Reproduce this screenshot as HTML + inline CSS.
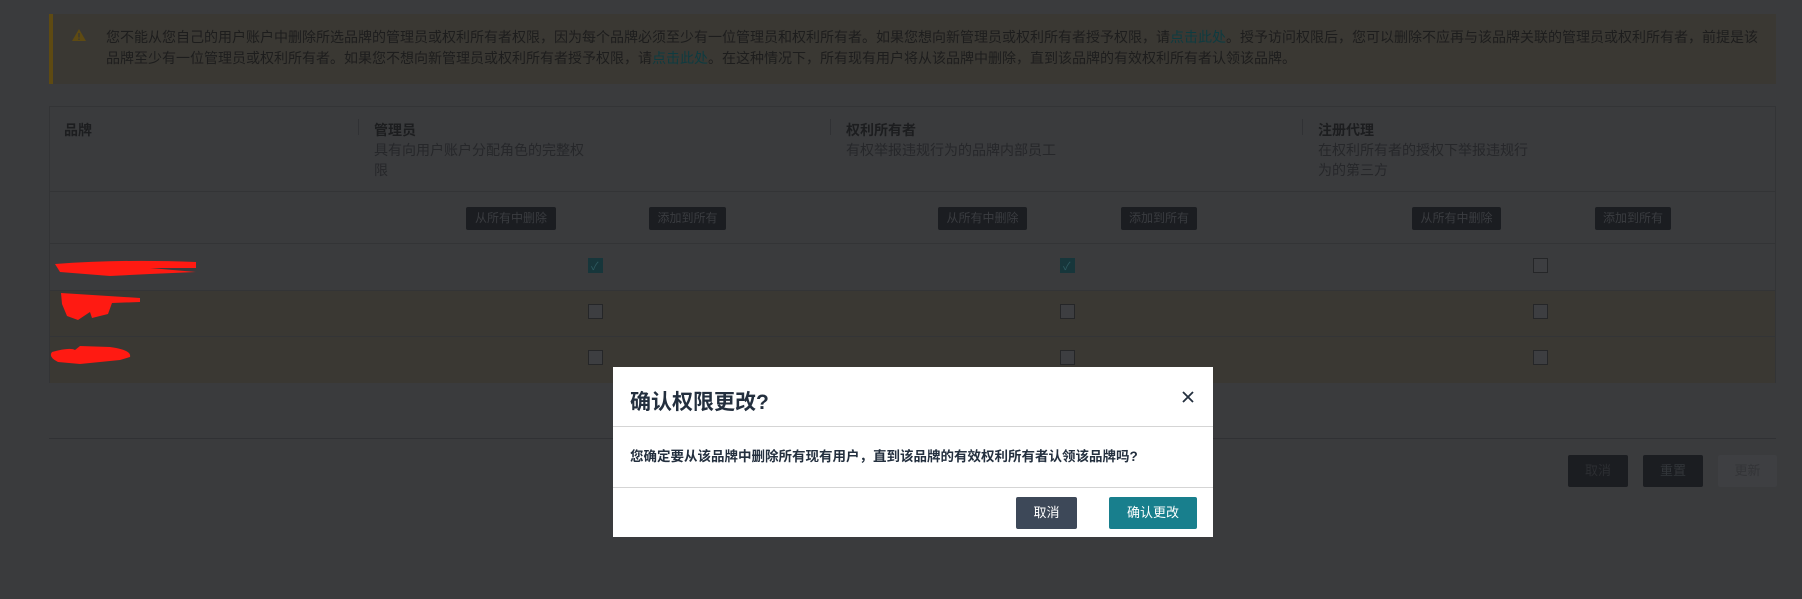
<!DOCTYPE html>
<html><head><meta charset="utf-8"><style>
*{box-sizing:border-box;margin:0;padding:0}
body{width:1802px;height:599px;background:#3a3b3d;font-family:"Liberation Sans","Noto Sans CJK SC",sans-serif;position:relative;overflow:hidden;color:#222}
.a{position:absolute}
.alert{left:49px;top:14px;width:1727px;height:70px;background:#3a3833;border-left:4px solid #5e4a12}
.alert p{position:absolute;left:53px;top:13px;width:1662px;font-size:14px;line-height:21px;color:#1d1d1d}
.alert p span{color:#0e3b40}
.tbl{left:49px;top:106px;width:1727px;height:277px;border:1px solid #333436}
.hl{height:1px;background:#333436;left:0;right:0}
.hd{font-size:14px;font-weight:bold;color:#1c1d1f}
.sd{font-size:14px;color:#26272a;line-height:20px}
.btn{background:#1b1d21;color:#3a3c40;font-size:12px;text-align:center;line-height:23px;height:23px;border-radius:2px}
.cb{width:15px;height:15px;border:1px solid #252628;background:#3d3e41}
.ck{background:#17363b;border-color:#17363b}
.ck:after{content:"✓";color:#2e5a60;font-size:11px;position:absolute;left:2px;top:-1px}
.dlg{left:613px;top:367px;width:600px;height:170px;background:#fff}
</style></head><body>
<div class="a alert">
<svg class="a" style="left:18px;top:14px" width="16" height="14"><path d="M8 1 L15 13 L1 13 Z" fill="#5e4a12"/><rect x="7.3" y="5" width="1.4" height="4.5" fill="#3a3833"/><rect x="7.3" y="10.5" width="1.4" height="1.4" fill="#3a3833"/></svg>
<p>您不能从您自己的用户账户中删除所选品牌的管理员或权利所有者权限，因为每个品牌必须至少有一位管理员和权利所有者。如果您想向新管理员或权利所有者授予权限，请<span>点击此处</span>。授予访问权限后，您可以删除不应再与该品牌关联的管理员或权利所有者，前提是该品牌至少有一位管理员或权利所有者。如果您不想向新管理员或权利所有者授予权限，请<span>点击此处</span>。在这种情况下，所有现有用户将从该品牌中删除，直到该品牌的有效权利所有者认领该品牌。</p>
</div>
<div class="a tbl">
<div class="a hl" style="top:84px"></div>
<div class="a hl" style="top:136px"></div>
<div class="a hl" style="top:183px"></div>
<div class="a" style="left:0;right:0;top:184px;height:92px;background:#3a3833"></div>
<div class="a hl" style="top:229px"></div>
<div class="a" style="left:308px;top:12px;width:1px;height:16px;background:#303134"></div>
<div class="a" style="left:780px;top:12px;width:1px;height:16px;background:#303134"></div>
<div class="a" style="left:1252px;top:12px;width:1px;height:16px;background:#303134"></div>
<div class="a hd" style="left:14px;top:13px">品牌</div>
<div class="a hd" style="left:324px;top:13px">管理员</div>
<div class="a sd" style="left:324px;top:33px;width:214px">具有向用户账户分配角色的完整权限</div>
<div class="a hd" style="left:796px;top:13px">权利所有者</div>
<div class="a sd" style="left:796px;top:33px">有权举报违规行为的品牌内部员工</div>
<div class="a hd" style="left:1268px;top:13px">注册代理</div>
<div class="a sd" style="left:1268px;top:33px;width:214px">在权利所有者的授权下举报违规行为的第三方</div>
<div class="a btn" style="left:416px;top:100px;width:90px">从所有中删除</div>
<div class="a btn" style="left:599px;top:100px;width:77px">添加到所有</div>
<div class="a btn" style="left:888px;top:100px;width:89px">从所有中删除</div>
<div class="a btn" style="left:1071px;top:100px;width:76px">添加到所有</div>
<div class="a btn" style="left:1362px;top:100px;width:89px">从所有中删除</div>
<div class="a btn" style="left:1545px;top:100px;width:76px">添加到所有</div>
<div class="a cb ck" style="left:538px;top:151px"></div>
<div class="a cb ck" style="left:1010px;top:151px"></div>
<div class="a cb" style="left:1483px;top:151px"></div>
<div class="a cb" style="left:538px;top:197px"></div>
<div class="a cb" style="left:1010px;top:197px"></div>
<div class="a cb" style="left:1483px;top:197px"></div>
<div class="a cb" style="left:538px;top:243px"></div>
<div class="a cb" style="left:1010px;top:243px"></div>
<div class="a cb" style="left:1483px;top:243px"></div>
</div>
<svg class="a" style="left:0;top:0" width="220" height="400">
<path d="M55 264 Q120 259 196 262 L196 268 L150 268 L196 272 L150 274 L110 276 L60 272 Z" fill="#ff1a12"/>
<path d="M61 293 L140 298 L140 302 L112 303 L108 314 L92 318 L90 312 L78 320 L67 316 L62 304 Z" fill="#ff1a12"/>
<path d="M52 352 Q70 347 75 350 L80 346 L110 347 Q132 350 130 357 L120 360 L80 364 L58 362 Q48 357 52 352 Z" fill="#ff1a12"/>
</svg>
<div class="a" style="left:49px;top:438px;width:1727px;height:1px;background:#303134"></div>
<div class="a btn" style="left:1568px;top:455px;width:60px;height:32px;line-height:32px;font-size:13px;color:#2c2e32">取消</div>
<div class="a btn" style="left:1643px;top:455px;width:60px;height:32px;line-height:32px;font-size:13px;color:#33363a">重置</div>
<div class="a btn" style="left:1718px;top:455px;width:59px;height:32px;line-height:32px;font-size:13px;background:#3e3f42;color:#333437">更新</div>
<div class="a dlg">
<div class="a" style="left:17px;top:19px;font-size:21px;font-weight:bold;color:#232f3e">确认权限更改?</div>
<svg class="a" style="left:568px;top:23px" width="14" height="14"><path d="M2 2 L12 12 M12 2 L2 12" stroke="#232f3e" stroke-width="1.8"/></svg>
<div class="a" style="left:0;right:0;top:59px;height:1px;background:#d5d5d5"></div>
<div class="a" style="left:17px;top:78px;font-size:13.5px;font-weight:bold;color:#232f3e">您确定要从该品牌中删除所有现有用户，直到该品牌的有效权利所有者认领该品牌吗?</div>
<div class="a" style="left:0;right:0;top:120px;height:1px;background:#d5d5d5"></div>
<div class="a" style="left:403px;top:130px;width:61px;height:32px;background:#3d4858;color:#fff;font-size:13px;text-align:center;line-height:32px;border-radius:2px">取消</div>
<div class="a" style="left:496px;top:130px;width:88px;height:32px;background:#187f8d;color:#fff;font-size:13px;text-align:center;line-height:32px;border-radius:2px">确认更改</div>
</div>
</body></html>
